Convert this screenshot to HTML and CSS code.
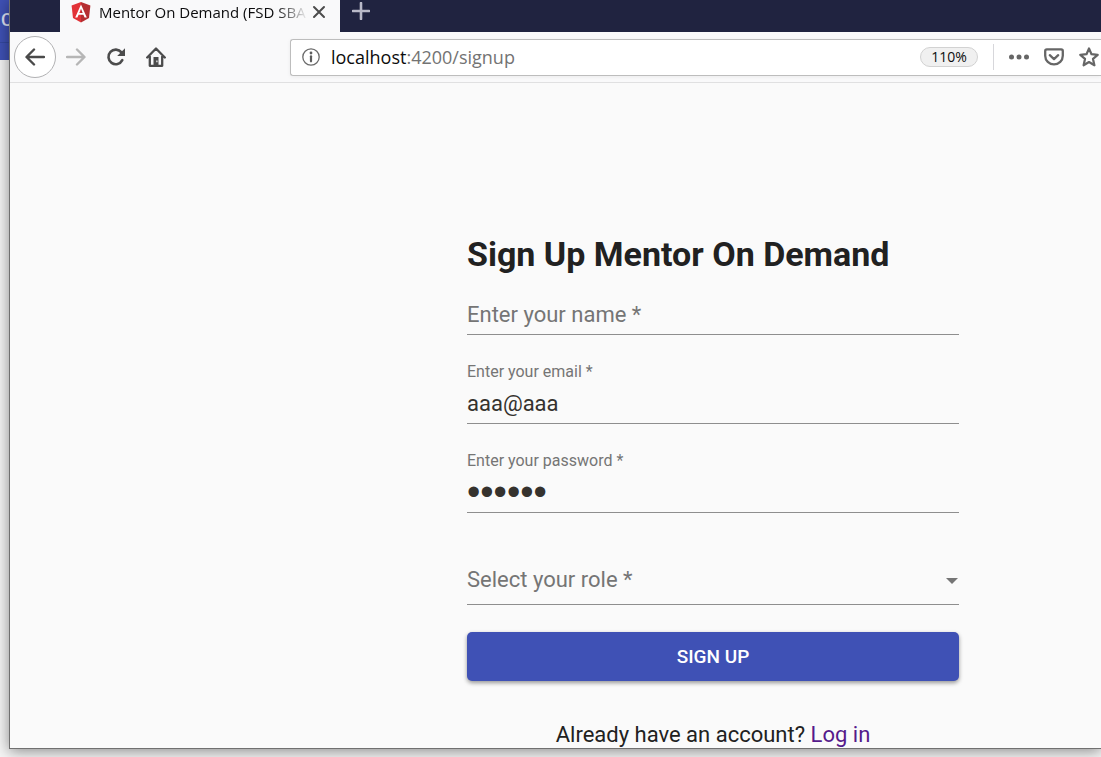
FILE: index.html
```
<!DOCTYPE html>
<html lang="en">
<head>
<meta charset="utf-8">
<title>Mentor On Demand (FSD SBA)</title>
<link rel="stylesheet" href="styles.css">
</head>
<body class="desktop">
<div class="back-window"><div class="back-toolbar">C</div></div>
<div class="browser">
  <header class="tab-strip">
    <div class="tab">
      <svg class="tab-logo" viewBox="0 0 20 21" width="20" height="21" aria-hidden="true">
        <path d="M10 0 0.6 3.4 2 16 10 20.5z" fill="#e23237"/>
        <path d="M10 0l9.4 3.4L18 16l-8 4.5z" fill="#b52e31"/>
        <path fill-rule="evenodd" d="M10 2.6 4.2 15.6h2.2l1.2-2.9h4.8l1.2 2.9h2.2zM10 6.7l1.7 4.2H8.3z" fill="#fff"/>
      </svg>
      <span class="tab-title">Mentor On Demand (FSD SBA</span>
      <button class="icon-button tab-close" aria-label="Close tab">
        <svg viewBox="0 0 14 14" width="14" height="14"><path d="M2 2l10 10M12 2 2 12" stroke="#4c4c4c" stroke-width="2" stroke-linecap="round"/></svg>
      </button>
    </div>
    <button class="icon-button new-tab" aria-label="New tab">
      <svg viewBox="0 0 18 18" width="18" height="18"><path d="M9 1v16M1 9h16" stroke="#b9b9c8" stroke-width="2.600" stroke-linecap="round"/></svg>
    </button>
  </header>
  <nav class="toolbar">
    <button class="icon-button back" aria-label="Back">
      <svg viewBox="0 0 20 18" width="20" height="18"><path d="M19 9H2M9 1.5 1.5 9 9 16.500" fill="none" stroke="#4a4a4a" stroke-width="2.400" stroke-linecap="round" stroke-linejoin="round"/></svg>
    </button>
    <button class="icon-button" aria-label="Forward">
      <svg viewBox="0 0 20 18" width="20" height="18"><path d="M1 9h17M11 1.500 18.500 9 11 16.500" fill="none" stroke="#b6b6b6" stroke-width="2.400" stroke-linecap="round" stroke-linejoin="round"/></svg>
    </button>
    <button class="icon-button" aria-label="Reload">
      <svg viewBox="0 0 20 20" width="20" height="20"><path d="M16.300 13.200A7.300 7.300 0 1 1 15.500 5.400" fill="none" stroke="#4c4c4c" stroke-width="2.600" stroke-linecap="round"/><path d="M19 1.200v7.800h-7.800z" fill="#4c4c4c"/></svg>
    </button>
    <button class="icon-button" aria-label="Home">
      <svg viewBox="0 0 20 20" width="20" height="20"><path d="M1.200 10.500 10 1.500l8.800 9M3.800 9.500v9.300h12.400V9.500" fill="none" stroke="#4c4c4c" stroke-width="2.300" stroke-linecap="round" stroke-linejoin="round"/><path fill-rule="evenodd" d="M7.500 10h5v9h-5zM10.300 13.500v1.800h1.200v-1.800z" fill="#4c4c4c"/></svg>
    </button>
    <div class="address-bar">
      <svg viewBox="0 0 18 18" width="18" height="18" aria-hidden="true"><circle cx="9" cy="9" r="8.200" fill="none" stroke="#6b6b6b" stroke-width="1.300"/><path d="M9 8.300v5" stroke="#5c5c5c" stroke-width="2.200" stroke-linecap="round"/><circle cx="9" cy="5" r="1.400" fill="#5c5c5c"/></svg>
      <div class="address">localhost<span class="address-path">:4200/signup</span></div>
      <button class="zoom-level">110%</button>
      <div class="page-actions">
        <button class="icon-button" aria-label="Page actions">
          <svg viewBox="0 0 20 20" width="20" height="20" fill="#666"><circle cx="2.500" cy="10" r="2.500"/><circle cx="10" cy="10" r="2.500"/><circle cx="17.500" cy="10" r="2.500"/></svg>
        </button>
        <button class="icon-button" aria-label="Save to Pocket">
          <svg viewBox="0 0 20 20" width="20" height="20" fill="none" stroke="#666" stroke-linecap="round" stroke-linejoin="round"><path d="M2.800 2.300h14.400q1.600 0 1.600 1.600v4.900a8.800 8.600 0 0 1-17.600 0V3.900q0-1.600 1.600-1.600z" stroke-width="2.300"/><path d="M5.800 8.200 10 12.100l4.200-3.900" stroke-width="2.300"/></svg>
        </button>
        <button class="icon-button" aria-label="Bookmark this page">
          <svg viewBox="0 0 20 20" width="20" height="20"><path d="M10 1.500l2.500 5.700 6.200.6-4.700 4.100 1.400 6.400L10 15l-5.400 3.300L6 11.900 1.300 7.800l6.200-.6z" fill="none" stroke="#666" stroke-width="2.200" stroke-linejoin="round"/></svg>
        </button>
      </div>
    </div>
  </nav>
  <main class="page">
    <form class="signup">
      <h1 class="signup-title">Sign Up Mentor On Demand</h1>
      <div class="field">
        <input class="field-input" type="text" aria-label="Enter your name" placeholder="Enter your name *">
      </div>
      <div class="field">
        <label class="field-label" for="email">Enter your email *</label>
        <input class="field-input" id="email" type="email" value="aaa@aaa">
      </div>
      <div class="field">
        <label class="field-label" for="password">Enter your password *</label>
        <input class="field-input field-password" id="password" type="password" value="aaaaaa">
      </div>
      <div class="field field-role">
        <select class="field-input field-select" aria-label="Select your role">
          <option>Select your role *</option>
        </select>
        <svg class="caret" viewBox="0 0 12 6" width="12" height="6" aria-hidden="true"><path d="M0 0h12L6 6z" fill="#757575"/></svg>
      </div>
      <button class="submit" type="button">SIGN UP</button>
      <p class="login">Already have an account? <a class="login-link" href="#login">Log in</a></p>
    </form>
  </main>
</div>
</body>
</html>
```
FILE: styles.css
```
* {
  box-sizing: border-box;
}

.desktop {
  display: flex;
  min-height: 100vh;
  margin: 0;
  padding: 0 0 8px 9px;
  overflow: hidden;
  background: #f5f5f5;
  font-family: Roboto, sans-serif;
}

/* Window partly hidden behind the browser */
.back-window {
  position: absolute;
  top: 0;
  left: 0;
  width: 40px;
}

.back-toolbar {
  height: 60px;
  padding: 8px 0 0 1px;
  background: linear-gradient(#3f51b5 42px, #3448a0 42px, #3448a0 43px, #3f51b5 43px);
  color: #dde0f2;
  font: 500 18px/24px Roboto, sans-serif;
}

.browser {
  position: relative;
  display: flex;
  flex: 1;
  flex-direction: column;
  min-width: 0;
  border: solid #707070;
  border-width: 0 0 1px 1px;
  background: #fafafa;
  box-shadow: 0 2px 14px rgba(0, 0, 0, 0.45);
  color: #212121;
}

button {
  border: 0;
  font-family: inherit;
}

.icon-button {
  display: flex;
  flex: none;
  align-items: center;
  justify-content: center;
  padding: 0;
  background: none;
}

.tab-strip {
  display: flex;
  height: 32px;
  padding-left: 50px;
  background: #202340;
}

.tab {
  display: flex;
  align-items: center;
  width: 280px;
  padding: 0 14px 8px 11px;
  background: #f9f9fa;
  color: #0c0c0d;
}

.tab-logo {
  flex: none;
  margin-right: 8px;
}

.tab-title {
  flex: 1;
  overflow: hidden;
  font: 15px/22px "Open Sans", sans-serif;
  white-space: nowrap;
  -webkit-mask-image: linear-gradient(to left, transparent, #000 32px);
  mask-image: linear-gradient(to left, transparent, #000 32px);
}

.tab-close {
  margin-left: 4px;
}

.new-tab {
  margin-left: 12px;
  padding-bottom: 10px;
}

.toolbar {
  display: flex;
  gap: 20px;
  align-items: center;
  height: 51px;
  padding-left: 4px;
  border-bottom: 1px solid #e0e0e1;
  background: #f9f9fa;
}

.back {
  width: 42px;
  height: 42px;
  margin-right: -10px;
  border: 1px solid #b1b1b3;
  border-radius: 50%;
  background: #fff;
}

.address-bar {
  display: flex;
  flex: 1;
  align-items: center;
  height: 37px;
  margin-left: 104px;
  padding-left: 11px;
  border: 1px solid #bdbdbd;
  border-right: 0;
  border-radius: 3px 0 0 3px;
  background: #fff;
  box-shadow: 0 1px 4px rgba(0, 0, 0, 0.06);
}

.address {
  flex: 1;
  margin-left: 11px;
  color: #0c0c0d;
  font: 18px/24px "Open Sans", sans-serif;
}

.address-path {
  color: #737373;
}

.zoom-level {
  width: 58px;
  height: 20px;
  padding: 0;
  border: 1px solid #d2d2d2;
  border-radius: 10px;
  background: #f0f0f0;
  color: #0c0c0d;
  font: 14px/18px "Open Sans", sans-serif;
}

.page-actions {
  display: flex;
  gap: 15px;
  align-items: center;
  height: 26px;
  margin-left: 15px;
  padding: 0 2px 0 15px;
  border-left: 1px solid #d7d7db;
}

.page {
  display: flex;
  flex: 1;
  justify-content: flex-end;
  padding: 147px 142px 0 16px;
}

.signup {
  width: 100%;
  max-width: 492px;
}

.signup-title {
  margin: 0 0 20px;
  font-size: 34px;
  font-weight: 700;
  line-height: 48px;
}

.field {
  margin-bottom: 26px;
  border-bottom: 1px solid #8e8e8e;
}

.field-label {
  display: block;
  color: #757575;
  font-size: 16px;
  line-height: 22px;
}

.field-input {
  display: block;
  width: 100%;
  height: 36px;
  margin: 0;
  padding: 0 0 4px;
  border: 0;
  outline: 0;
  background: none;
  color: #35322e;
  font-family: Roboto, sans-serif;
  font-size: 22px;
}

.field-label + .field-input {
  height: 40px;
  padding: 2px 0 2px;
}

.field-input::placeholder {
  color: #757575;
  opacity: 1;
}

/* A larger size gives the masking dots their weight */
.field-label + .field-password {
  padding: 0;
  font-family: "Liberation Sans", sans-serif;
  font-size: 38px;
}

.field-role {
  display: flex;
  align-items: center;
  margin-bottom: 27px;
  padding: 24px 0 5px;
}

.field-select {
  color: #757575;
  appearance: none;
}

.caret {
  flex: none;
  margin-left: -13px;
  pointer-events: none;
}

.submit {
  width: 100%;
  height: 49px;
  border-radius: 5px;
  background: #3f51b5;
  box-shadow: 0 2px 4px rgba(0, 0, 0, 0.4);
  color: #fff;
  font-size: 19px;
  font-weight: 500;
}

.login {
  margin: 40px 0 -4px;
  font-size: 22px;
  line-height: 28px;
  text-align: center;
}

.login-link {
  color: #551a8b;
  text-decoration: none;
}
```
